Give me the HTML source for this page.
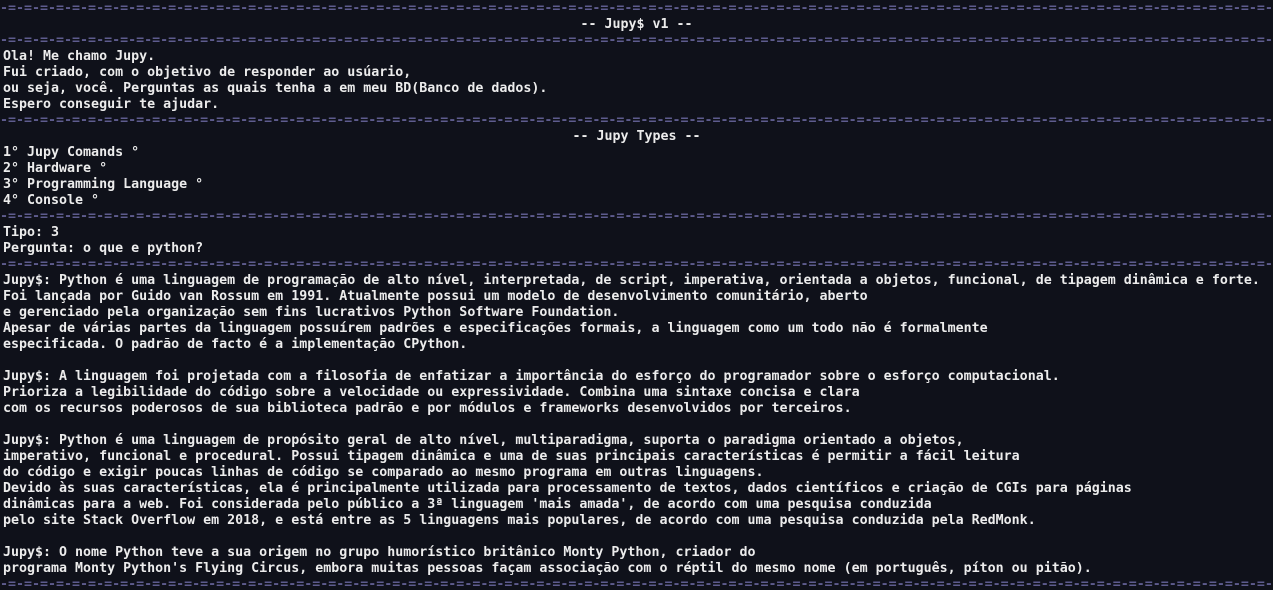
<!DOCTYPE html>
<html><head><meta charset="utf-8"><style>
html,body{margin:0;padding:0;background:#0f111a;width:1273px;height:590px;overflow:hidden}
pre{margin:1px 0 0 3px;font-family:"DejaVu Sans Mono","Liberation Mono",monospace;font-weight:bold;font-size:13.3px;line-height:16px;color:#ececec;white-space:pre}
.s{color:#5e5c8e;display:block;margin-left:-3px;width:1273px;overflow:hidden}
.c{display:block;text-align:center;margin-left:-3px;width:1273px}
</style></head><body><pre><span class="s">-=-=-=-=-=-=-=-=-=-=-=-=-=-=-=-=-=-=-=-=-=-=-=-=-=-=-=-=-=-=-=-=-=-=-=-=-=-=-=-=-=-=-=-=-=-=-=-=-=-=-=-=-=-=-=-=-=-=-=-=-=-=-=-=-=-=-=-=-=-=-=-=-=-=-=-=-=-=-=-=-=-=</span><span class="c">-- Jupy$ v1 --</span><span class="s">-=-=-=-=-=-=-=-=-=-=-=-=-=-=-=-=-=-=-=-=-=-=-=-=-=-=-=-=-=-=-=-=-=-=-=-=-=-=-=-=-=-=-=-=-=-=-=-=-=-=-=-=-=-=-=-=-=-=-=-=-=-=-=-=-=-=-=-=-=-=-=-=-=-=-=-=-=-=-=-=-=-=</span>Ola! Me chamo Jupy.
Fui criado, com o objetivo de responder ao usúario,
ou seja, você. Perguntas as quais tenha a em meu BD(Banco de dados).
Espero conseguir te ajudar.
<span class="s">-=-=-=-=-=-=-=-=-=-=-=-=-=-=-=-=-=-=-=-=-=-=-=-=-=-=-=-=-=-=-=-=-=-=-=-=-=-=-=-=-=-=-=-=-=-=-=-=-=-=-=-=-=-=-=-=-=-=-=-=-=-=-=-=-=-=-=-=-=-=-=-=-=-=-=-=-=-=-=-=-=-=</span><span class="c">-- Jupy Types --</span>1° Jupy Comands °
2° Hardware °
3° Programming Language °
4° Console °
<span class="s">-=-=-=-=-=-=-=-=-=-=-=-=-=-=-=-=-=-=-=-=-=-=-=-=-=-=-=-=-=-=-=-=-=-=-=-=-=-=-=-=-=-=-=-=-=-=-=-=-=-=-=-=-=-=-=-=-=-=-=-=-=-=-=-=-=-=-=-=-=-=-=-=-=-=-=-=-=-=-=-=-=-=</span>Tipo: 3
Pergunta: o que e python?
<span class="s">-=-=-=-=-=-=-=-=-=-=-=-=-=-=-=-=-=-=-=-=-=-=-=-=-=-=-=-=-=-=-=-=-=-=-=-=-=-=-=-=-=-=-=-=-=-=-=-=-=-=-=-=-=-=-=-=-=-=-=-=-=-=-=-=-=-=-=-=-=-=-=-=-=-=-=-=-=-=-=-=-=-=</span>Jupy$: Python é uma linguagem de programação de alto nível, interpretada, de script, imperativa, orientada a objetos, funcional, de tipagem dinâmica e forte.
Foi lançada por Guido van Rossum em 1991. Atualmente possui um modelo de desenvolvimento comunitário, aberto
e gerenciado pela organização sem fins lucrativos Python Software Foundation.
Apesar de várias partes da linguagem possuírem padrões e especificações formais, a linguagem como um todo não é formalmente
especificada. O padrão de facto é a implementação CPython.

Jupy$: A linguagem foi projetada com a filosofia de enfatizar a importância do esforço do programador sobre o esforço computacional.
Prioriza a legibilidade do código sobre a velocidade ou expressividade. Combina uma sintaxe concisa e clara
com os recursos poderosos de sua biblioteca padrão e por módulos e frameworks desenvolvidos por terceiros.

Jupy$: Python é uma linguagem de propósito geral de alto nível, multiparadigma, suporta o paradigma orientado a objetos,
imperativo, funcional e procedural. Possui tipagem dinâmica e uma de suas principais características é permitir a fácil leitura
do código e exigir poucas linhas de código se comparado ao mesmo programa em outras linguagens.
Devido às suas características, ela é principalmente utilizada para processamento de textos, dados científicos e criação de CGIs para páginas
dinâmicas para a web. Foi considerada pelo público a 3ª linguagem 'mais amada', de acordo com uma pesquisa conduzida
pelo site Stack Overflow em 2018, e está entre as 5 linguagens mais populares, de acordo com uma pesquisa conduzida pela RedMonk.

Jupy$: O nome Python teve a sua origem no grupo humorístico britânico Monty Python, criador do
programa Monty Python's Flying Circus, embora muitas pessoas façam associação com o réptil do mesmo nome (em português, píton ou pitão).
<span class="s">-=-=-=-=-=-=-=-=-=-=-=-=-=-=-=-=-=-=-=-=-=-=-=-=-=-=-=-=-=-=-=-=-=-=-=-=-=-=-=-=-=-=-=-=-=-=-=-=-=-=-=-=-=-=-=-=-=-=-=-=-=-=-=-=-=-=-=-=-=-=-=-=-=-=-=-=-=-=-=-=-=-=</span></pre></body></html>
